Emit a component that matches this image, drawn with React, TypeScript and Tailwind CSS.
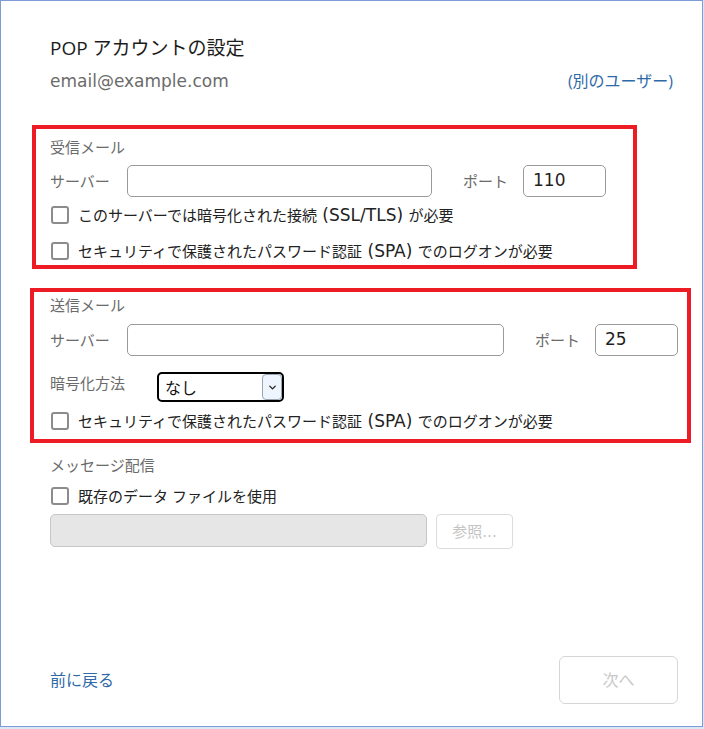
import { ChevronDown } from "lucide-react"
import type { ReactNode } from "react"

const font = "font-['Open_Sans','Noto_Sans_CJK_JP',sans-serif]"
const latin = "font-['DejaVu_Sans','Noto_Sans_CJK_JP',sans-serif]"

function Lt({ children }: { children: ReactNode }) {
  return <span className={`${latin} text-[17px]`}>{children}</span>
}

function Checkbox({ children }: { children: ReactNode }) {
  return (
    <label className="flex h-[28px] items-center">
      <span className="ml-[1px] h-[18px] w-[18px] shrink-0 rounded-[3px] border-2 border-[#8c8c8c] bg-white" />
      <span className="ml-[9px] text-[15px] leading-[24px] text-[#222]">{children}</span>
    </label>
  )
}

function TextBox({ width, value }: { width: string; value?: string }) {
  return (
    <div
      className={`${width} ${latin} flex h-[32px] items-center rounded-[5px] border border-[#9a9a9a] bg-white pl-[9px] text-[17px] text-[#1f1f1f]`}
    >
      {value}
    </div>
  )
}

export default function App() {
  return (
    <div className={`h-[729px] w-[704px] bg-[#dae5f6] ${font}`}>
      <div className="flex h-[727px] w-[703px] flex-col border border-[#7d9bd6] bg-white pb-[22px] pl-[49px] pr-[24px] pt-[33px]">
        <h1 className="text-[19px] leading-[28px] text-[#1c1c1c]">POP アカウントの設定</h1>
        <div className="mt-[7px] flex items-center justify-between leading-[24px]">
          <span className={`${latin} text-[17px] text-[#6b6b6b]`}>email@example.com</span>
          <a className="mr-[5px] text-[16px] text-[#2f6aa8]">(別のユーザー)</a>
        </div>

        {/* 受信メール */}
        <section className="ml-[-18px] mt-[32px] w-[605px] border-4 border-[#ed1c24] pl-[14px] pt-[6px]">
          <div className="text-[15px] leading-[24px] text-[#6b6b6b]">受信メール</div>
          <div className="mt-[6px] flex items-center">
            <span className="w-[77px] text-[15px] text-[#6b6b6b]">サーバー</span>
            <TextBox width="w-[305px]" />
            <span className="ml-[31px] w-[60px] text-[15px] text-[#6b6b6b]">ポート</span>
            <TextBox width="w-[83px]" value="110" />
          </div>
          <div className="mt-[4px]">
            <Checkbox>
              このサーバーでは暗号化された接続<Lt> (SSL/TLS) </Lt>が必要
            </Checkbox>
          </div>
          <div className="mt-[8px]">
            <Checkbox>
              セキュリティで保護されたパスワード認証<Lt> (SPA) </Lt>でのログオンが必要
            </Checkbox>
          </div>
        </section>

        {/* 送信メール */}
        <section className="ml-[-20px] mt-[19px] w-[661px] border-4 border-[#ed1c24] pb-[4px] pl-[16px] pt-[1px]">
          <div className="text-[15px] leading-[24px] text-[#6b6b6b]">送信メール</div>
          <div className="mt-[7px] flex items-center">
            <span className="w-[77px] text-[15px] text-[#6b6b6b]">サーバー</span>
            <TextBox width="w-[377px]" />
            <span className="ml-[31px] w-[60px] text-[15px] text-[#6b6b6b]">ポート</span>
            <TextBox width="w-[83px]" value="25" />
          </div>
          <div className="mt-[16px] flex items-start">
            <span className="mt-[1px] w-[107px] text-[15px] leading-[20px] text-[#6b6b6b]">暗号化方法</span>
            <div className="flex h-[30px] w-[127px] items-center justify-between rounded-[5px] border-2 border-black bg-white pl-[6px]">
              <span className="mt-[2px] text-[16px] text-[#111]">なし</span>
              <span className="flex h-[26px] w-[20px] items-center justify-center rounded-[4px] border border-[#9aa5b4] bg-[#eef5fd]">
                <ChevronDown size={11} strokeWidth={3} className="text-[#222]" />
              </span>
            </div>
          </div>
          <div className="mt-[5px]">
            <Checkbox>
              セキュリティで保護されたパスワード認証<Lt> (SPA) </Lt>でのログオンが必要
            </Checkbox>
          </div>
        </section>

        <div className="mt-[10px] text-[15px] leading-[24px] text-[#6b6b6b]">メッセージ配信</div>
        <div className="mt-[5px]">
          <Checkbox>既存のデータ ファイルを使用</Checkbox>
        </div>
        <div className="mt-[4px] flex items-start">
          <div className="h-[33px] w-[377px] rounded-[5px] border border-[#c6c6c6] bg-[#e6e6e6]" />
          <button className="ml-[9px] h-[35px] w-[77px] rounded-[4px] border border-[#dcdcdc] bg-white text-[15px] text-[#c4c4c4]">
            参照<span className={latin}>...</span>
          </button>
        </div>

        <div className="mt-auto flex items-center justify-between">
          <a className="text-[16px] text-[#2f6aa8]">前に戻る</a>
          <button className="h-[48px] w-[119px] rounded-[6px] border border-[#d6d6d6] bg-white text-[16px] text-[#c8c8c8]">
            次へ
          </button>
        </div>
      </div>
    </div>
  )
}
